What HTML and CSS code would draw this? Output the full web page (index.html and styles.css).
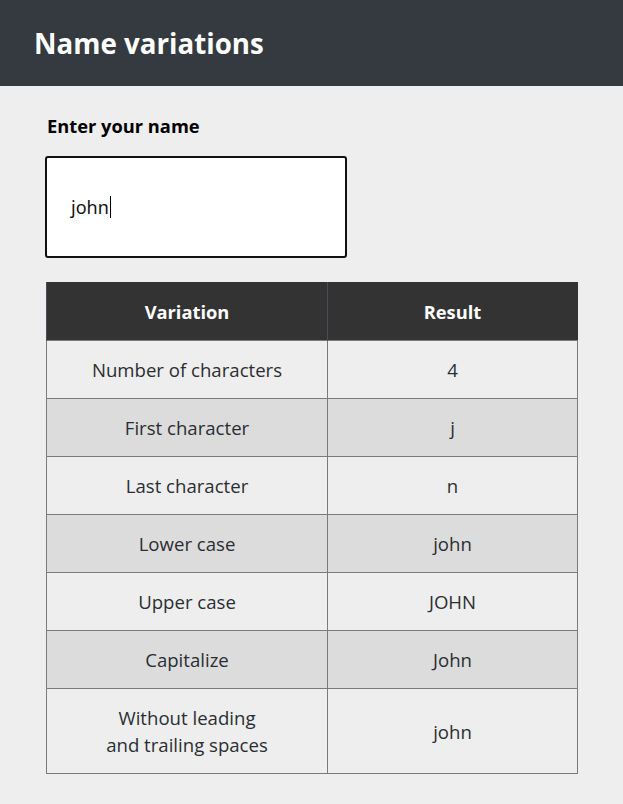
FILE: index.html
```html
<!DOCTYPE html>
<html>
<head>
<meta charset="utf-8">
<link rel="stylesheet" href="styles.css">
</head>
<body>
<header class="topbar"><h1 class="title">Name variations</h1></header>
<main class="content">
  <label class="label" for="name">Enter your name</label>
  <div class="input-box"><span class="input-text">john</span><span class="caret"></span></div>
  <table class="vars">
    <thead>
      <tr><th class="c1">Variation</th><th class="c2">Result</th></tr>
    </thead>
    <tbody>
      <tr><td>Number of characters</td><td>4</td></tr>
      <tr><td>First character</td><td>j</td></tr>
      <tr><td>Last character</td><td>n</td></tr>
      <tr><td>Lower case</td><td>john</td></tr>
      <tr><td>Upper case</td><td>JOHN</td></tr>
      <tr><td>Capitalize</td><td>John</td></tr>
      <tr><td>Without leading<br>and trailing spaces</td><td>john</td></tr>
    </tbody>
  </table>
</main>
</body>
</html>
```
FILE: styles.css
```css
html, body { margin: 0; padding: 0; }
body {
  background: #eeeeee;
  font-family: "Open Sans", "Noto Sans", sans-serif;
  color: #212529;
  width: 623px;
  height: 804px;
  overflow: hidden;
}
.topbar {
  background: #343a40;
  height: 86px;
  display: flex;
  align-items: center;
  padding-left: 34px;
}
.title {
  margin: 0;
  color: #fff;
  font-size: 27.7px;
  font-weight: 700;
}
.content {
  padding: 26px 0 0 46px;
  display: flex;
  flex-direction: column;
  align-items: flex-start;
}
.label {
  font-weight: 700;
  font-size: 18.3px;
  color: #000;
  margin-left: 1px;
  line-height: 28px;
}
.input-box {
  margin-top: 16px;
  margin-left: -1px;
  height: 98px;
  border: 2px solid #111;
  border-radius: 3px;
  background: #fff;
  display: flex;
  align-items: center;
  padding-left: 24px;
  box-sizing: content-box;
  width: 274px;
}
.input-text {
  font-family: "Noto Sans", sans-serif;
  font-size: 18px;
  color: #111;
}
.caret {
  display: inline-block;
  width: 1px;
  height: 22px;
  background: #000;
  margin-left: 1px;
}
.vars {
  margin-top: 24px;
  border-collapse: collapse;
  width: 532px;
  border: 1px solid #333;
  font-size: 18.6px;
}
.vars th {
  background: #333333;
  color: #fff;
  font-weight: 700;
  font-size: 18.3px;
  height: 57px;
  padding: 0;
  border-left: 1px solid #4a4f55;
}
.vars th.c1 { width: 280px; }
.vars td {
  text-align: center;
  padding: 15px 10px;
  line-height: 27px;
  border: 1px solid #7a7a7a;
  color: #2a2e33;
}
.vars tbody tr:nth-child(odd) td { background: #eeeeee; }
.vars tbody tr:nth-child(even) td { background: #dcdcdc; }
```
